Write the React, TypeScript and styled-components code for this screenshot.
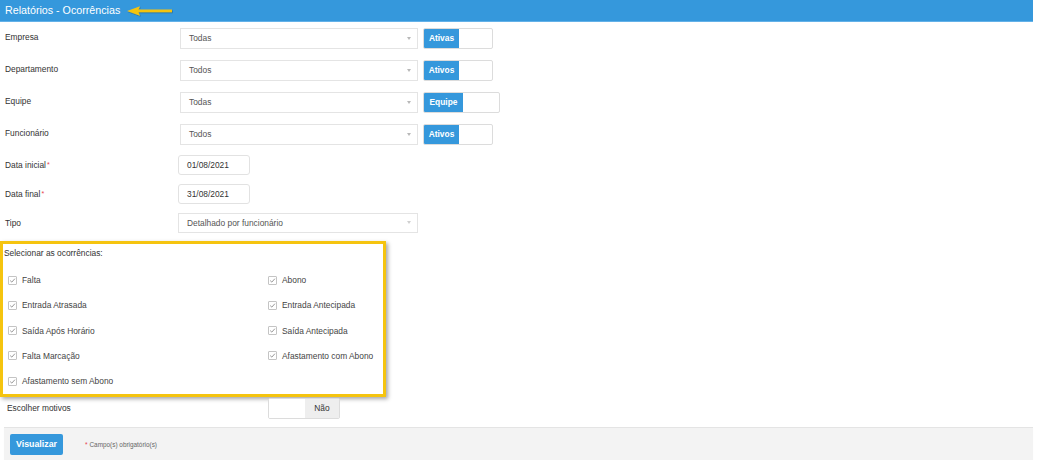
import React from "react";
import styled, { createGlobalStyle } from "styled-components";

const GlobalStyle = createGlobalStyle`
  body {
    margin: 0;
    background: #fff;
    font-family: "Liberation Sans", Arial, sans-serif;
  }
`;

const Page = styled.div`
  width: 1033px;
`;

const Header = styled.header`
  height: 21px;
  background: #3598dc;
  border-bottom: 1px solid #63b1e8;
  display: flex;
  align-items: center;
  padding-left: 5px;
  gap: 6px;
`;

const Title = styled.h1`
  margin: 0;
  font-size: 10.7px;
  font-weight: normal;
  color: #fff;
  line-height: 1;
`;

const FieldRow = styled.div<{ $h: number }>`
  display: flex;
  align-items: center;
  height: ${(p) => p.$h}px;
`;

const Label = styled.label<{ $w: number; $pl?: number; $lift?: number }>`
  box-sizing: border-box;
  width: ${(p) => p.$w}px;
  padding-left: ${(p) => p.$pl ?? 5}px;
  margin-bottom: ${(p) => p.$lift ?? 0}px;
  font-size: 8.4px;
  color: #333;
  flex-shrink: 0;
`;

const Req = styled.span`
  color: #e73d4a;
  font-size: 7px;
  margin-left: 1px;
  vertical-align: 1px;
`;

const SelectBox = styled.div<{ $w: number; $h: number }>`
  box-sizing: border-box;
  width: ${(p) => p.$w}px;
  height: ${(p) => p.$h}px;
  border: 1px solid #e4e4e4;
  display: flex;
  align-items: center;
  justify-content: space-between;
  padding: 0 6px 0 8px;
  font-size: 8.4px;
  color: #555;
  background: #fff;
`;

const Caret = styled.span<{ $light?: boolean }>`
  width: 0;
  height: 0;
  border-left: 2.5px solid transparent;
  border-right: 2.5px solid transparent;
  border-top: 3px solid ${(p) => (p.$light ? "#d0d0d0" : "#b8b8b8")};
`;

const Toggle = styled.div<{ $w: number; $ml?: number }>`
  box-sizing: border-box;
  width: ${(p) => p.$w}px;
  height: 21px;
  margin-left: ${(p) => p.$ml ?? 5}px;
  border: 1px solid #dcdcdc;
  border-radius: 2px;
  display: flex;
  overflow: hidden;
  background: #fff;
`;

const ToggleOn = styled.span<{ $w: number }>`
  width: ${(p) => p.$w}px;
  background: #3598dc;
  color: #fff;
  font-weight: bold;
  font-size: 8.4px;
  display: flex;
  align-items: center;
  justify-content: center;
`;

const ToggleBlank = styled.span<{ $w: number }>`
  width: ${(p) => p.$w}px;
  background: #fff;
`;

const ToggleOff = styled.span`
  flex: 1;
  background: #eeeeee;
  color: #333;
  font-size: 8.4px;
  display: flex;
  align-items: center;
  justify-content: center;
`;

const DateInput = styled.div`
  box-sizing: border-box;
  width: 72px;
  height: 20px;
  border: 1px solid #e2e2e2;
  border-radius: 3px;
  display: flex;
  align-items: center;
  padding-left: 8px;
  font-size: 8.4px;
  color: #333;
`;

const Highlight = styled.section`
  box-sizing: border-box;
  width: 386px;
  margin-top: 4px;
  border: 3px solid #f5c40f;
  box-shadow: 2px 2px 4px rgba(0, 0, 0, 0.35);
  padding: 4px 0 0 1px;
`;

const BoxTitle = styled.div`
  font-size: 8.4px;
  line-height: 10px;
  color: #333;
`;

const CheckGrid = styled.div`
  display: grid;
  grid-template-columns: 260px 1fr;
  grid-auto-rows: 25.25px;
  margin-top: 9.5px;
  padding-left: 4px;
`;

const CheckItem = styled.label`
  display: flex;
  align-items: center;
  gap: 5px;
  font-size: 8.4px;
  color: #444;
`;

const CheckBox = styled.span`
  box-sizing: border-box;
  width: 9px;
  height: 9px;
  border: 1px solid #c4c4c4;
  border-radius: 1px;
  display: flex;
  align-items: center;
  justify-content: center;
  background: #fff;
`;

const Footer = styled.footer`
  margin: 7.5px 0 0 4px;
  height: 33px;
  box-sizing: border-box;
  background: #f3f3f3;
  border-top: 1px solid #e4e4e4;
  box-shadow: 0 1px 1px rgba(0, 0, 0, 0.04);
  display: flex;
  align-items: center;
  padding-left: 6px;
`;

const Button = styled.button`
  width: 53px;
  height: 21px;
  border: 0;
  border-radius: 2px;
  background: #3598dc;
  color: #fff;
  font-family: "Liberation Sans", Arial, sans-serif;
  font-weight: bold;
  font-size: 8.8px;
  padding: 0;
`;

const Note = styled.span`
  margin-left: 22px;
  font-size: 6.4px;
  color: #666;
`;

const NoteStar = styled.span`
  color: #e73d4a;
  margin-right: 2px;
`;

const Arrow = () => (
  <svg width="48" height="12" viewBox="0 0 48 12">
    <defs>
      <filter id="sh" x="-10%" y="-50%" width="130%" height="200%">
        <feDropShadow dx="0.6" dy="0.8" stdDeviation="0.6" floodColor="#000" floodOpacity="0.35" />
      </filter>
    </defs>
    <g filter="url(#sh)">
      <path d="M12 4.5 L46 4.5 L46 7.3 L12 7.3 Z" fill="#f5c40f" />
      <path d="M1 6 L14 1.2 L12 6 L14 10.8 Z" fill="#f5c40f" />
    </g>
  </svg>
);

const Check = () => (
  <svg width="7" height="7" viewBox="0 0 7 7">
    <path d="M1.2 3.6 L2.8 5.1 L5.9 1.7" fill="none" stroke="#8a8a8a" strokeWidth="0.9" />
  </svg>
);

const selects = [
  { label: "Empresa", value: "Todas", toggle: "Ativas", tw: 70, on: 35 },
  { label: "Departamento", value: "Todos", toggle: "Ativos", tw: 70, on: 35 },
  { label: "Equipe", value: "Todas", toggle: "Equipe", tw: 77, on: 39 },
  { label: "Funcionário", value: "Todos", toggle: "Ativos", tw: 70, on: 35 },
];

const checks = [
  "Falta",
  "Abono",
  "Entrada Atrasada",
  "Entrada Antecipada",
  "Saída Após Horário",
  "Saída Antecipada",
  "Falta Marcação",
  "Afastamento com Abono",
  "Afastamento sem Abono",
];

export default function App() {
  return (
    <Page>
      <GlobalStyle />
      <Header>
        <Title>Relatórios - Ocorrências</Title>
        <Arrow />
      </Header>

      {selects.map((s) => (
        <FieldRow $h={32} key={s.label}>
          <Label $w={180} $lift={3}>{s.label}</Label>
          <SelectBox $w={238} $h={21}>
            {s.value}
            <Caret />
          </SelectBox>
          <Toggle $w={s.tw}>
            <ToggleOn $w={s.on}>{s.toggle}</ToggleOn>
          </Toggle>
        </FieldRow>
      ))}

      <FieldRow $h={29}>
        <Label $w={178}>
          Data inicial<Req>*</Req>
        </Label>
        <DateInput>01/08/2021</DateInput>
      </FieldRow>
      <FieldRow $h={29}>
        <Label $w={178}>
          Data final<Req>*</Req>
        </Label>
        <DateInput>31/08/2021</DateInput>
      </FieldRow>
      <FieldRow $h={29}>
        <Label $w={178}>Tipo</Label>
        <SelectBox $w={240} $h={20}>
          Detalhado por funcionário
          <Caret $light />
        </SelectBox>
      </FieldRow>

      <Highlight>
        <BoxTitle>Selecionar as ocorrências:</BoxTitle>
        <CheckGrid>
          {checks.map((c) => (
            <CheckItem key={c}>
              <CheckBox>
                <Check />
              </CheckBox>
              {c}
            </CheckItem>
          ))}
        </CheckGrid>
      </Highlight>

      <FieldRow $h={23}>
        <Label $w={268} $pl={7}>Escolher motivos</Label>
        <Toggle $w={72} $ml={0}>
          <ToggleBlank $w={36} />
          <ToggleOff>Não</ToggleOff>
        </Toggle>
      </FieldRow>

      <Footer>
        <Button>Visualizar</Button>
        <Note>
          <NoteStar>*</NoteStar>Campo(s) obrigatório(s)
        </Note>
      </Footer>
    </Page>
  );
}
